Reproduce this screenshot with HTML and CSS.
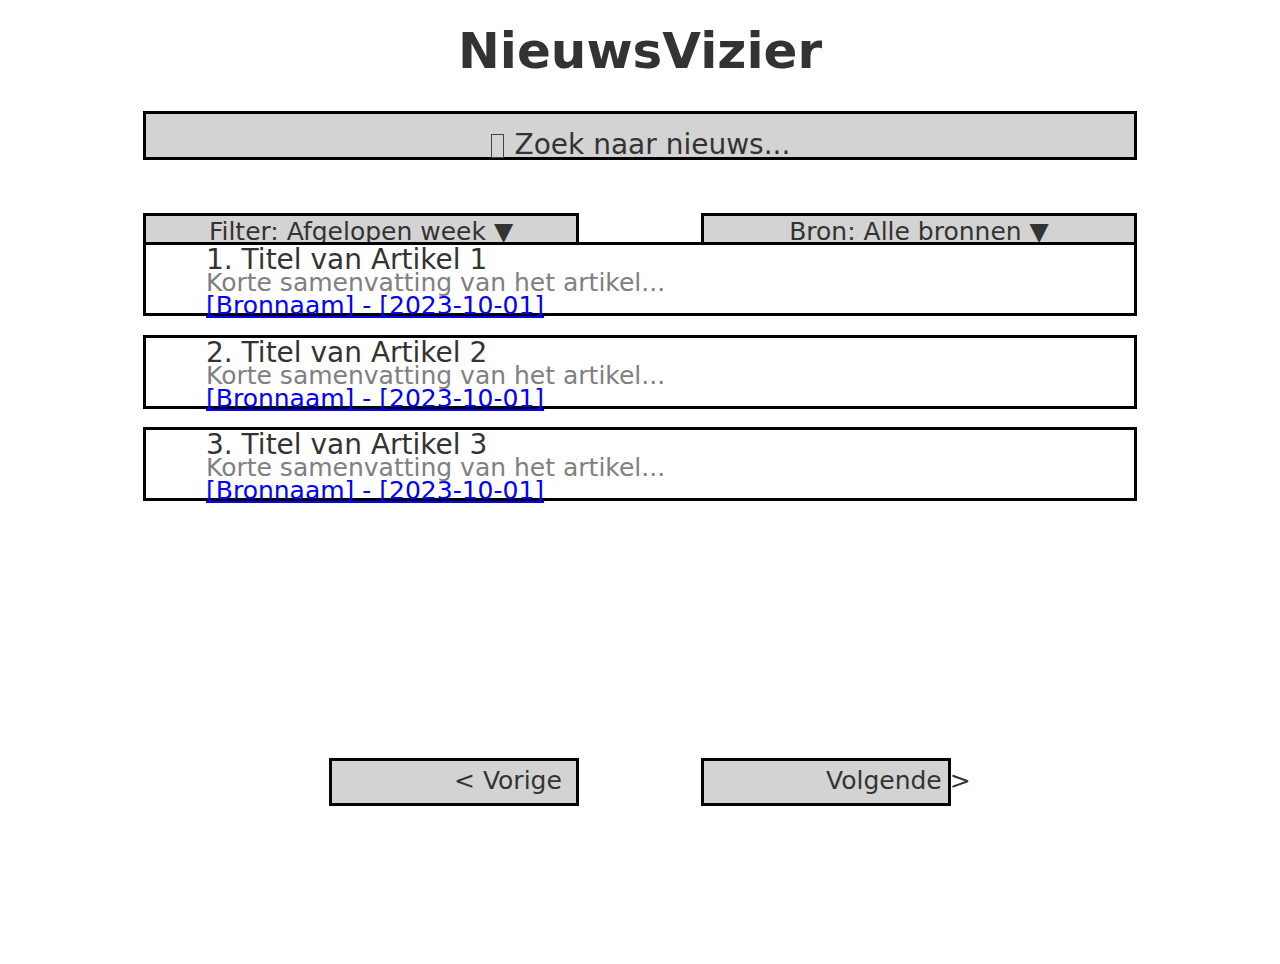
FILE: index.html
```html
<!DOCTYPE html>
<html lang="nl">
<head>
<meta charset="utf-8">
<title>NieuwsVizier</title>
<link rel="stylesheet" href="styles.css">
</head>
<body>
<div class="page">
  <h1 class="title">NieuwsVizier</h1>
  <div class="search"><span class="tofu" aria-hidden="true"></span> Zoek naar nieuws...</div>
  <div class="filters">
    <div class="filter">Filter: Afgelopen week ▼</div>
    <div class="filter">Bron: Alle bronnen ▼</div>
  </div>
  <div class="articles">
    <div class="article">
      <div class="a-title">1. Titel van Artikel 1</div>
      <div class="a-summary">Korte samenvatting van het artikel...</div>
      <a class="a-link" href="#">[Bronnaam] - [2023-10-01]</a>
    </div>
    <div class="article">
      <div class="a-title">2. Titel van Artikel 2</div>
      <div class="a-summary">Korte samenvatting van het artikel...</div>
      <a class="a-link" href="#">[Bronnaam] - [2023-10-01]</a>
    </div>
    <div class="article">
      <div class="a-title">3. Titel van Artikel 3</div>
      <div class="a-summary">Korte samenvatting van het artikel...</div>
      <a class="a-link" href="#">[Bronnaam] - [2023-10-01]</a>
    </div>
  </div>
  <div class="pager">
    <div class="pbtn">&lt; Vorige</div>
    <div class="pbtn">Volgende &gt;</div>
  </div>
</div>
</body>
</html>
```

FILE: styles.css
```css
html, body {
  margin: 0;
  padding: 0;
  background: #ffffff;
}
body {
  font-family: "DejaVu Sans", sans-serif;
  color: #333333;
}
.page {
  width: 994px;
  margin: 0 auto;
  display: flex;
  flex-direction: column;
}
.title {
  margin: 22px 0 0;
  font-size: 50px;
  font-weight: bold;
  line-height: 58px;
  text-align: center;
  color: #333333;
}
.search {
  margin-top: 31px;
  height: 49px;
  box-sizing: border-box;
  border: 3px solid #000000;
  background: #d3d3d3;
  padding-top: 15px;
  font-size: 28px;
  line-height: 32px;
  text-align: center;
  color: #333333;
  white-space: nowrap;
}
.tofu {
  display: inline-block;
  width: 13px;
  height: 24px;
  box-sizing: border-box;
  border: 1px solid #444444;
  margin: 0 2px 0 1px;
  vertical-align: -4px;
}
.filters {
  margin-top: 53px;
  height: 29px;
  display: flex;
  justify-content: space-between;
}
.filter {
  width: 436px;
  height: 48px;
  box-sizing: border-box;
  border: 3px solid #000000;
  background: #d3d3d3;
  padding-top: 2px;
  font-size: 25px;
  line-height: 27px;
  text-align: center;
  color: #333333;
  white-space: nowrap;
}
.articles {
  position: relative;
  display: flex;
  flex-direction: column;
  gap: 18.5px;
}
.article {
  height: 74px;
  box-sizing: border-box;
  border: 3px solid #000000;
  background: #ffffff;
  padding: 3px 0 0 60px;
  display: flex;
  flex-direction: column;
  align-items: flex-start;
  white-space: nowrap;
}
.a-title {
  font-size: 28px;
  line-height: 23px;
  color: #333333;
}
.a-summary {
  font-size: 25px;
  line-height: 23px;
  color: #808080;
}
.a-link {
  font-size: 25px;
  line-height: 23px;
  color: #0000ff;
  text-decoration: underline;
  text-decoration-skip-ink: none;
}
.pager {
  margin-top: 257px;
  display: flex;
  justify-content: center;
  gap: 122px;
}
.pbtn {
  width: 250px;
  height: 48px;
  box-sizing: border-box;
  border: 3px solid #000000;
  background: #d3d3d3;
  padding: 6px 0 0 122px;
  font-size: 25px;
  line-height: 28px;
  color: #333333;
  white-space: nowrap;
}
```
